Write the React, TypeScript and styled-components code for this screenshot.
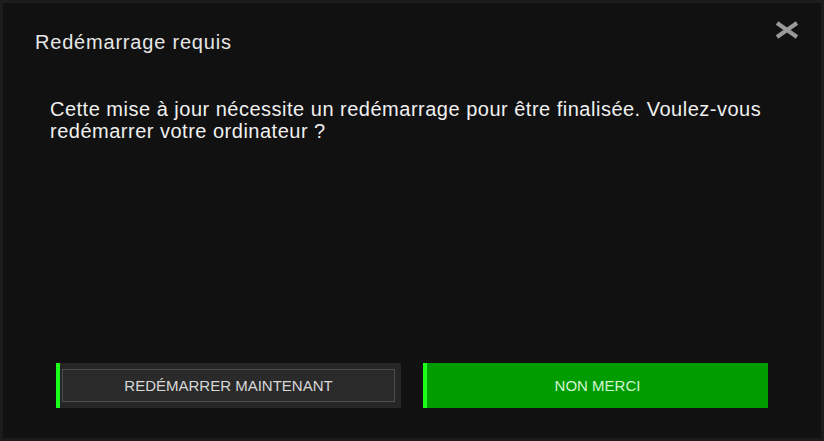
import React from "react";
import styled, { createGlobalStyle } from "styled-components";

const Global = createGlobalStyle`
  html, body { margin: 0; padding: 0; background: #1b1b1b; }
  #root { width: 824px; height: 441px; }
`;

const Frame = styled.div`
  box-sizing: border-box;
  width: 824px;
  height: 441px;
  border: 3px solid #1c1c1c;
  background: #111111;
  display: flex;
  flex-direction: column;
  font-family: "Liberation Sans", Arial, sans-serif;
`;

const Header = styled.div`
  display: flex;
  justify-content: space-between;
  align-items: flex-start;
  padding: 24px 20px 0 32px;
`;

const Title = styled.h1`
  margin: 0;
  font-size: 20px;
  font-weight: 400;
  color: #e6e6e6;
  letter-spacing: 0.8px;
  line-height: 30px;
`;

const Close = styled.button`
  border: none;
  background: transparent;
  padding: 0;
  margin-top: -7px;
  width: 28px;
  height: 20px;
  display: flex;
  align-items: center;
  justify-content: center;
  cursor: pointer;
`;

const Body = styled.p`
  margin: 41px 20px 0 47px;
  font-size: 20px;
  line-height: 22px;
  color: #f0f0f0;
  letter-spacing: 0.5px;
  flex: 1;
`;

const Actions = styled.div`
  display: flex;
  gap: 22px;
  padding: 0 53px 30px 53px;
`;

const Button = styled.button<{ $primary?: boolean }>`
  box-sizing: border-box;
  width: 345px;
  height: 45px;
  border: none;
  border-left: 4px solid #1aff1a;
  background: ${(p) => (p.$primary ? "#009c00" : "#262626")};
  padding: ${(p) => (p.$primary ? "0" : "6px 6px 6px 2px")};
  display: flex;
  cursor: pointer;
`;

const Label = styled.span<{ $framed?: boolean }>`
  flex: 1;
  display: flex;
  align-items: center;
  justify-content: center;
  box-sizing: border-box;
  border: ${(p) => (p.$framed ? "1px solid #4e4e4e" : "none")};
  background: ${(p) => (p.$framed ? "#2a2a2a" : "transparent")};
  font-family: "Liberation Sans", Arial, sans-serif;
  font-size: 15px;
  letter-spacing: 0;
  color: ${(p) => (p.$framed ? "#d8d8d8" : "#d4f5d4")};
`;

export default function App() {
  return (
    <>
      <Global />
      <Frame>
        <Header>
          <Title>Redémarrage requis</Title>
          <Close aria-label="Fermer">
            <svg width="26" height="18" viewBox="0 0 26 18">
              <path d="M3 2 L23 16 M23 2 L3 16" stroke="#9a9a9a" strokeWidth="4" strokeLinecap="butt" />
            </svg>
          </Close>
        </Header>
        <Body>
          Cette mise à jour nécessite un redémarrage pour être finalisée. Voulez-vous
          <br />
          redémarrer votre ordinateur ?
        </Body>
        <Actions>
          <Button>
            <Label $framed>REDÉMARRER MAINTENANT</Label>
          </Button>
          <Button $primary>
            <Label>NON MERCI</Label>
          </Button>
        </Actions>
      </Frame>
    </>
  );
}
